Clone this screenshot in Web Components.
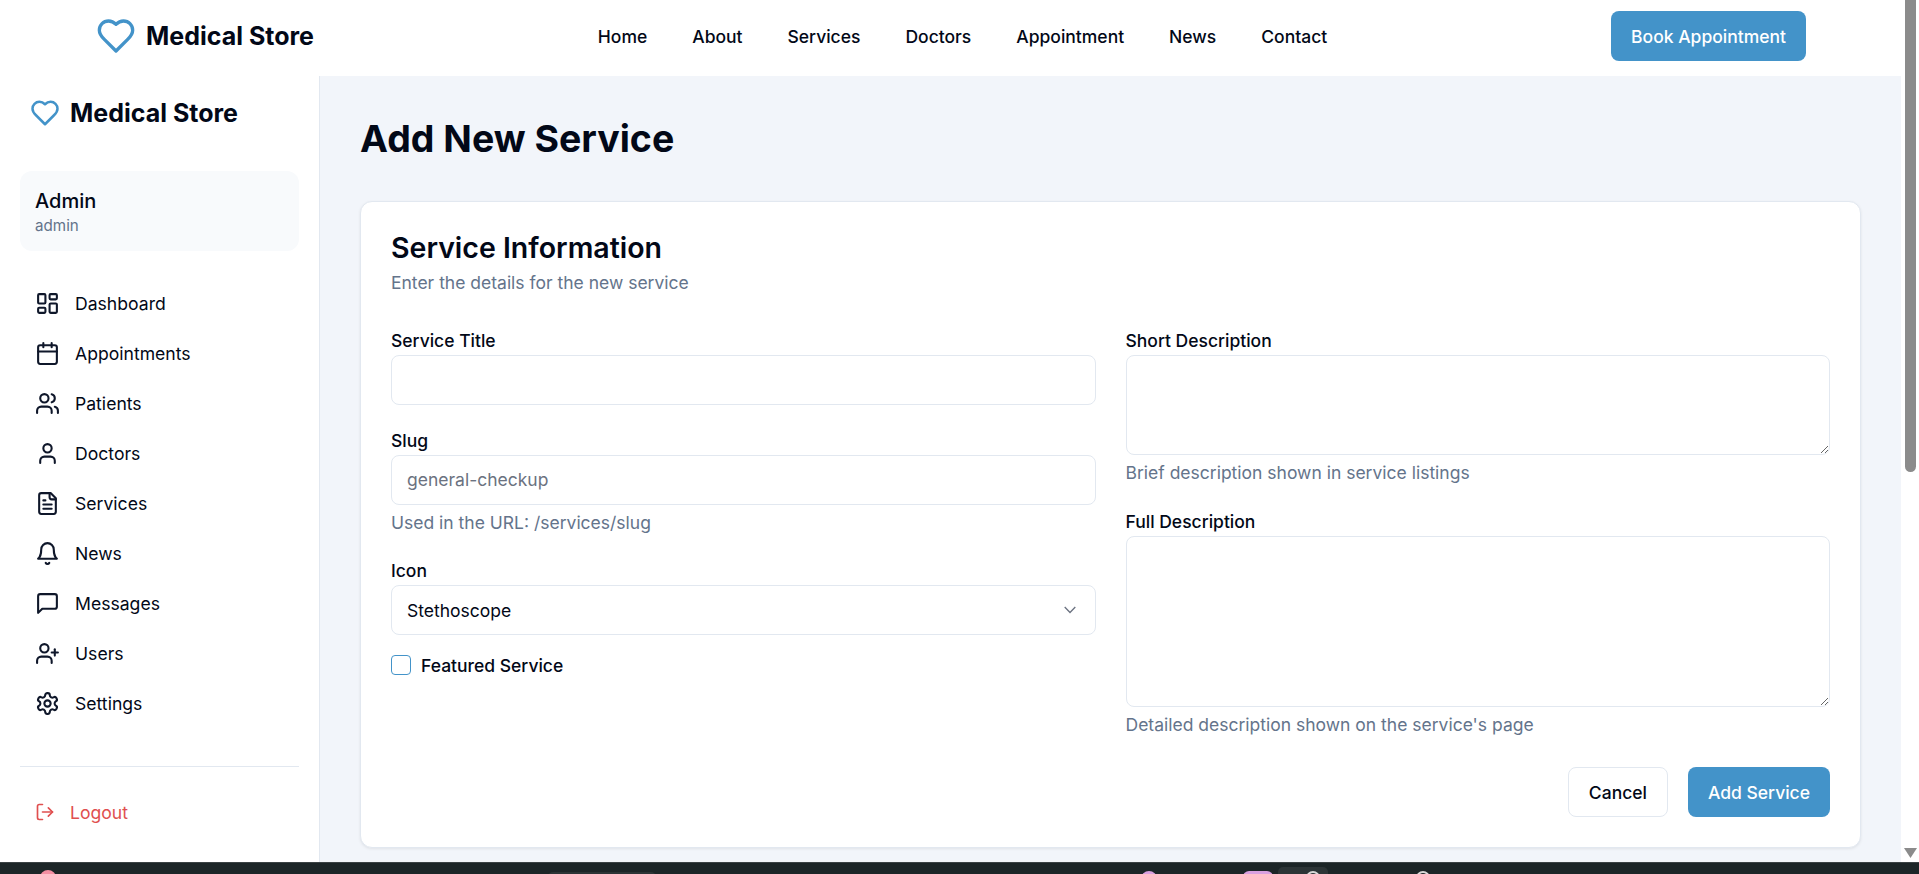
<!DOCTYPE html>
<html lang="en">
<head>
<meta charset="utf-8">
<title>Add New Service</title>
<style>
    html, body { margin: 0; height: 100%; overflow: hidden; background: #fff; }
    body { font-family: Inter, "Liberation Sans", sans-serif; color: #020817; display: flex; flex-direction: column; }
    #app { display: flex; flex: 1; min-height: 0; }
    #page { display: flex; flex-direction: column; flex: 1; min-width: 0; }
    #body { display: flex; flex: 1; min-height: 0; }
</style>
</head>
<body>
<div id="app">
    <div id="page">
        <site-header></site-header>
        <div id="body">
            <side-bar>
                <side-link icon="dashboard">Dashboard</side-link>
                <side-link icon="calendar">Appointments</side-link>
                <side-link icon="users">Patients</side-link>
                <side-link icon="user">Doctors</side-link>
                <side-link icon="file">Services</side-link>
                <side-link icon="bell">News</side-link>
                <side-link icon="message">Messages</side-link>
                <side-link icon="userplus">Users</side-link>
                <side-link icon="settings">Settings</side-link>
            </side-bar>
            <service-page></service-page>
        </div>
    </div>
    <scroll-bar></scroll-bar>
</div>
<task-bar></task-bar>

<script>
    const ICONS = {
        heart: '<path d="M19 14c1.49-1.46 3-3.21 3-5.5A5.5 5.5 0 0 0 16.5 3c-1.76 0-3 .5-4.5 2-1.5-1.5-2.74-2-4.5-2A5.5 5.5 0 0 0 2 8.5c0 2.3 1.5 4.05 3 5.5l7 7Z"/>',
        dashboard: '<rect width="7" height="9" x="3" y="3" rx="1"/><rect width="7" height="5" x="14" y="3" rx="1"/><rect width="7" height="9" x="14" y="12" rx="1"/><rect width="7" height="5" x="3" y="16" rx="1"/>',
        calendar: '<path d="M8 2v4"/><path d="M16 2v4"/><rect width="18" height="18" x="3" y="4" rx="2"/><path d="M3 10h18"/>',
        users: '<path d="M16 21v-2a4 4 0 0 0-4-4H6a4 4 0 0 0-4 4v2"/><circle cx="9" cy="7" r="4"/><path d="M22 21v-2a4 4 0 0 0-3-3.87"/><path d="M16 3.13a4 4 0 0 1 0 7.75"/>',
        user: '<path d="M19 21v-2a4 4 0 0 0-4-4H9a4 4 0 0 0-4 4v2"/><circle cx="12" cy="7" r="4"/>',
        file: '<path d="M15 2H6a2 2 0 0 0-2 2v16a2 2 0 0 0 2 2h12a2 2 0 0 0 2-2V7Z"/><path d="M14 2v4a2 2 0 0 0 2 2h4"/><path d="M10 9H8"/><path d="M16 13H8"/><path d="M16 17H8"/>',
        bell: '<path d="M6 8a6 6 0 0 1 12 0c0 7 3 9 3 9H3s3-2 3-9"/><path d="M10.3 21a1.94 1.94 0 0 0 3.4 0"/>',
        message: '<path d="M21 15a2 2 0 0 1-2 2H7l-4 4V5a2 2 0 0 1 2-2h14a2 2 0 0 1 2 2z"/>',
        userplus: '<path d="M16 21v-2a4 4 0 0 0-4-4H6a4 4 0 0 0-4 4v2"/><circle cx="9" cy="7" r="4"/><path d="M19 8v6"/><path d="M22 11h-6"/>',
        settings: '<path d="M12.22 2h-.44a2 2 0 0 0-2 2v.18a2 2 0 0 1-1 1.73l-.43.25a2 2 0 0 1-2 0l-.15-.08a2 2 0 0 0-2.73.73l-.22.38a2 2 0 0 0 .73 2.73l.15.1a2 2 0 0 1 1 1.72v.51a2 2 0 0 1-1 1.74l-.15.09a2 2 0 0 0-.73 2.73l.22.38a2 2 0 0 0 2.73.73l.15-.08a2 2 0 0 1 2 0l.43.25a2 2 0 0 1 1 1.73V20a2 2 0 0 0 2 2h.44a2 2 0 0 0 2-2v-.18a2 2 0 0 1 1-1.73l.43-.25a2 2 0 0 1 2 0l.15.08a2 2 0 0 0 2.73-.73l.22-.39a2 2 0 0 0-.73-2.73l-.15-.08a2 2 0 0 1-1-1.74v-.5a2 2 0 0 1 1-1.74l.15-.09a2 2 0 0 0 .73-2.73l-.22-.38a2 2 0 0 0-2.73-.73l-.15.08a2 2 0 0 1-2 0l-.43-.25a2 2 0 0 1-1-1.73V4a2 2 0 0 0-2-2z"/><circle cx="12" cy="12" r="3"/>',
        logout: '<path d="M9 21H5a2 2 0 0 1-2-2V5a2 2 0 0 1 2-2h4"/><path d="m16 17 5-5-5-5"/><path d="M21 12H9"/>'
    };

    function icon(name, size, color) {
        return `<svg width="${size}" height="${size}" viewBox="0 0 24 24" fill="none" stroke="${color}" stroke-width="2" stroke-linecap="round" stroke-linejoin="round" style="display:block;flex:none">${ICONS[name]}</svg>`;
    }

    class SiteHeader extends HTMLElement {
        constructor() {
            super();
            const links = ['Home', 'About', 'Services', 'Doctors', 'Appointment', 'News', 'Contact'];
            this.attachShadow({mode: 'open'}).innerHTML = `
                <style>
                    :host { display: flex; align-items: center; justify-content: space-between; height: 76px; box-sizing: border-box; padding: 11px 95px 15px 96px; background: #fff; flex: none; }
                    .logo { display: flex; align-items: center; gap: 10px; font-size: 25px; font-weight: 700; color: #020817; }
                    nav { display: flex; gap: 45px; }
                    a { color: #020817; text-decoration: none; font-size: 17.5px; font-weight: 500; }
                    button { height: 50px; padding: 0 20px; border: 0; border-radius: 8px; background: #4393c9; color: #fff; font: 500 17.5px Inter, sans-serif; }
                </style>
                <div class="logo">${icon('heart', 40, '#4393c9')}<span>Medical Store</span></div>
                <nav>${links.map(l => `<a href="#">${l}</a>`).join('')}</nav>
                <button>Book Appointment</button>`;
        }
    }

    class SideLink extends HTMLElement {
        constructor() {
            super();
            this.attachShadow({mode: 'open'}).innerHTML = `
                <style>
                    :host { display: flex; align-items: center; gap: 15px; height: 50px; padding: 0 15px; font-size: 17.6px; color: #020817; }
                </style>
                ${icon(this.getAttribute('icon'), 25, '#0f172a')}<slot></slot>`;
        }
    }

    class SideBar extends HTMLElement {
        constructor() {
            super();
            this.attachShadow({mode: 'open'}).innerHTML = `
                <style>
                    :host { display: flex; flex-direction: column; flex: none; width: 320px; box-sizing: border-box; padding: 0 20px; background: #fff; border-right: 1px solid #e2e8f0; }
                    .logo { display: flex; align-items: center; gap: 10px; height: 30px; margin: 22px 10px 0; font-size: 25px; font-weight: 700; }
                    .who { height: 80px; box-sizing: border-box; margin-top: 43px; padding: 15px 15px 0; border-radius: 12px; background: #f8fafc; }
                    .who b { display: block; font-size: 20px; line-height: 30px; font-weight: 500; }
                    .who small { display: block; font-size: 15.2px; line-height: 20px; color: #64748b; }
                    nav { display: flex; flex-direction: column; margin-top: 27px; }
                    hr { border: 0; border-top: 1px solid #e2e8f0; margin: 38px 0 0; width: 100%; }
                    .out { display: flex; align-items: center; gap: 15px; height: 24px; margin-top: 33px; padding: 0 15px; color: #e04f4f; font-size: 17.6px; }
                </style>
                <div class="logo">${icon('heart', 30, '#4393c9')}<span>Medical Store</span></div>
                <div class="who"><b>Admin</b><small>admin</small></div>
                <nav><slot></slot></nav>
                <hr>
                <div class="out">${icon('logout', 20, '#e04f4f')}<span>Logout</span></div>`;
        }
    }

    // one labelled control of the form, attribute kind says which
    class FormField extends HTMLElement {
        constructor() {
            super();
            const kind = this.getAttribute('kind') || 'input';
            const hint = this.getAttribute('hint');
            const rows = this.getAttribute('height');
            const ph = this.getAttribute('placeholder') || '';
            let control = `<input type="text" placeholder="${ph}">`;
            if (kind === 'area') control = `<textarea style="height:${rows}px"></textarea>`;
            if (kind === 'select') control = `<div class="sel"><select><option>${this.getAttribute('value')}</option></select>
                <svg width="12" height="8" viewBox="0 0 12 8" fill="none" stroke="#6b7280" stroke-width="1.3"><path d="M.7 1l5.3 5.5L11.3 1"/></svg></div>`;
            this.attachShadow({mode: 'open'}).innerHTML = `
                <style>
                    :host { display: block; margin-bottom: 20px; }
                    label { display: block; padding-top: 2px; font-size: 17.5px; font-weight: 500; line-height: 28px; }
                    input, textarea, select { display: block; width: 100%; height: 50px; box-sizing: border-box; margin: 0; padding: 0 15px; border: 1px solid #e2e8f0; border-radius: 8px; background: #fff; font: 400 17.5px Inter, sans-serif; color: #020817; outline: 0; }
                    input { padding-bottom: 1px; }
                    textarea { padding: 10px 15px; resize: vertical; }
                    select { appearance: none; }
                    ::placeholder { color: #6b7280; opacity: 1; }
                    .sel { position: relative; }
                    .sel svg { position: absolute; right: 20px; top: 21px; }
                    p { margin: 4px 0 0; height: 27px; font-size: 17.5px; line-height: 28px; color: #64748b; }
                </style>
                <label>${this.getAttribute('label')}</label>
                ${control}
                ${hint ? `<p>${hint}</p>` : ''}`;
        }
    }

    class CheckField extends HTMLElement {
        constructor() {
            super();
            this.attachShadow({mode: 'open'}).innerHTML = `
                <style>
                    :host { display: flex; align-items: center; gap: 10px; height: 20px; font-size: 17.5px; font-weight: 500; }
                    i { width: 20px; height: 20px; box-sizing: border-box; border: 1px solid #4393c9; border-radius: 4px; }
                </style>
                <i></i><slot></slot>`;
        }
    }

    class AppButton extends HTMLElement {
        constructor() {
            super();
            this.attachShadow({mode: 'open'}).innerHTML = `
                <style>
                    :host { display: flex; align-items: center; height: 50px; box-sizing: border-box; padding: 0 20px; border-radius: 8px; font-size: 17.5px; font-weight: 500; border: 1px solid #e2e8f0; background: #fff; color: #020817; }
                    :host([primary]) { background: #4393c9; border: 0; color: #fff; }
                </style>
                <slot></slot>`;
        }
    }

    class ServicePage extends HTMLElement {
        constructor() {
            super();
            this.attachShadow({mode: 'open'}).innerHTML = `
                <style>
                    :host { display: block; flex: 1; min-width: 0; padding: 40px; background: #f2f5fa; overflow: hidden; }
                    h1 { margin: 0 0 39px; font-size: 37.5px; line-height: 46px; font-weight: 700; }
                    .card { box-sizing: border-box; padding: 30px; background: #fff; border: 1px solid #e2e8f0; border-radius: 12px; box-shadow: 0 1px 3px rgba(0,0,0,.08); }
                    h2 { margin: 1px 0 6px; font-size: 28.5px; line-height: 30px; font-weight: 600; }
                    .sub { margin: 0 0 28px; font-size: 17.5px; line-height: 28px; color: #64748b; }
                    .grid { display: grid; grid-template-columns: 1fr 1fr; gap: 30px; }
                    .actions { display: flex; justify-content: flex-end; gap: 20px; margin-top: 9px; }
                </style>
                <h1>Add New Service</h1>
                <div class="card">
                    <h2>Service Information</h2>
                    <p class="sub">Enter the details for the new service</p>
                    <div class="grid">
                        <div>
                            <form-field label="Service Title"></form-field>
                            <form-field label="Slug" placeholder="general-checkup" hint="Used in the URL: /services/slug" style="margin-bottom:19px"></form-field>
                            <form-field label="Icon" kind="select" value="Stethoscope"></form-field>
                            <check-field>Featured Service</check-field>
                        </div>
                        <div>
                            <form-field label="Short Description" kind="area" height="100" hint="Brief description shown in service listings"></form-field>
                            <form-field label="Full Description" kind="area" height="171" hint="Detailed description shown on the service's page"></form-field>
                        </div>
                    </div>
                    <div class="actions">
                        <app-button>Cancel</app-button>
                        <app-button primary>Add Service</app-button>
                    </div>
                </div>`;
        }
    }

    class ScrollBar extends HTMLElement {
        constructor() {
            super();
            this.attachShadow({mode: 'open'}).innerHTML = `
                <style>
                    :host { display: flex; flex-direction: column; align-items: center; flex: none; width: 18px; background: #fff; }
                    .thumb { width: 11px; height: 472px; margin-left: 1px; background: #8b8b8b; border-radius: 0 0 6px 6px; }
                    .gap { flex: 1; }
                    svg { display: block; margin-bottom: 4px; }
                </style>
                <div class="thumb"></div><div class="gap"></div>
                <svg width="13" height="10" viewBox="0 0 13 10"><path d="M0 0h13L6.5 10z" fill="#8b8b8b"/></svg>`;
        }
    }

    class TaskBar extends HTMLElement {
        constructor() {
            super();
            this.attachShadow({mode: 'open'}).innerHTML = `
                <style>
                    :host { display: block; flex: none; height: 12px; background: #1c2527; border-top: 1px solid #3b4244; box-sizing: border-box; overflow: hidden; }
                    svg { display: block; }
                </style>
                <svg width="1919" height="11" viewBox="0 0 1919 11">
                    <circle cx="48" cy="15" r="8" fill="#f48fa3"/>
                    <rect x="548" y="9" width="108" height="12" rx="5" fill="#2c3436"/>
                    <circle cx="1149" cy="16" r="8" fill="#d9a0e0"/>
                    <rect x="1243" y="8" width="30" height="16" rx="6" fill="#d9a0e0"/>
                    <rect x="1278" y="4" width="50" height="20" rx="5" fill="#2c3436"/>
                    <circle cx="1313" cy="15" r="6" fill="none" stroke="#d8d8d8" stroke-width="2"/>
                    <circle cx="1423" cy="15" r="6" fill="none" stroke="#d8d8d8" stroke-width="2"/>
                </svg>`;
        }
    }

    customElements.define('site-header', SiteHeader);
    customElements.define('side-link', SideLink);
    customElements.define('side-bar', SideBar);
    customElements.define('form-field', FormField);
    customElements.define('check-field', CheckField);
    customElements.define('app-button', AppButton);
    customElements.define('service-page', ServicePage);
    customElements.define('scroll-bar', ScrollBar);
    customElements.define('task-bar', TaskBar);
</script>
</body>
</html>
